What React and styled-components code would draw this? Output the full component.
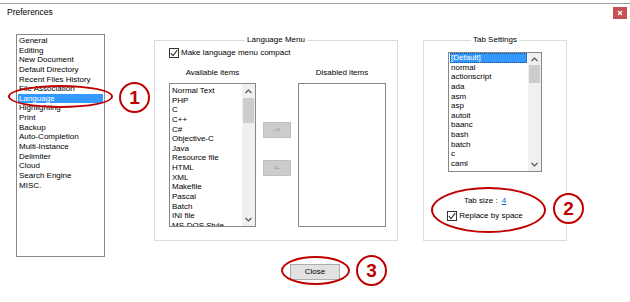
import React from 'react';
import styled, { createGlobalStyle } from 'styled-components';

const GlobalStyle = createGlobalStyle`
  html, body {
    margin: 0;
    padding: 0;
    background: #fff;
  }
  body {
    font-family: "Liberation Sans", Arial, sans-serif;
    font-size: 8px;
    color: #000;
  }
`;

const Window = styled.div`
  position: relative;
  width: 630px;
  height: 302px;
  overflow: hidden;
  background: #fff;
`;

const TitleBar = styled.div`
  margin-top: 3px;
  height: 26px;
  box-sizing: border-box;
  border-top: 1px solid #a0a0a0;
  display: flex;
  justify-content: space-between;
  align-items: flex-start;
`;

const Title = styled.div`
  padding: 3px 0 0 7px;
  font-size: 8.5px;
  line-height: 11px;
`;

const WinClose = styled.div`
  margin: 3px 3px 0 0;
  width: 14px;
  height: 12px;
  background: #c75050;
  display: flex;
  align-items: center;
  justify-content: center;
`;

const Body = styled.div`
  display: flex;
  align-items: flex-start;
  padding: 5px 0 0 16px;
`;

// generic list box with an optional scrollbar on the right
const ListBox = styled.div`
  width: ${p => p.$w}px;
  height: ${p => p.$h}px;
  margin-right: ${p => p.$mr || 0}px;
  box-sizing: border-box;
  border: 1px solid #828790;
  background: #fff;
  display: flex;
  overflow: hidden;
`;

const Items = styled.div`
  flex: 1;
  min-width: 0;
  overflow: hidden;
  padding: ${p => p.$pt || 0}px 1px 0 1px;
`;

const Item = styled.div`
  height: 9.65px;
  line-height: 9.65px;
  padding-left: 1px;
  white-space: nowrap;
  background: ${p => (p.$selected ? '#3399ff' : 'transparent')};
  color: ${p => (p.$selected ? '#fff' : '#000')};
  outline: ${p => (p.$focus ? '1px dotted #1a4f8a' : 'none')};
  outline-offset: -1px;
`;

const Scrollbar = styled.div`
  width: 13px;
  background: #f0f0f0;
  display: flex;
  flex-direction: column;
  align-items: center;
`;

const ArrowBox = styled.div`
  height: ${p => p.$h}px;
  width: 100%;
  display: flex;
  align-items: center;
  justify-content: center;
`;

const Thumb = styled.div`
  width: 11px;
  height: ${p => p.$h}px;
  background: #cdcdcd;
`;

const Spacer = styled.div`
  flex: 1;
`;

const Group = styled.fieldset`
  margin: 1px ${p => p.$mr || 0}px 0 0;
  padding: 0;
  min-width: 0;
  width: ${p => p.$w}px;
  height: 206px;
  box-sizing: border-box;
  border: 1px solid #dcdcdc;
  display: flex;
  flex-direction: column;
`;

const Legend = styled.legend`
  margin: 0 auto;
  padding: 0 2px;
  font-size: 8px;
  line-height: 10px;
`;

const LangContent = styled.div`
  padding: 3px 0 0 14px;
`;

const CheckRow = styled.label`
  display: flex;
  align-items: center;
  gap: 2px;
  height: 10px;
  line-height: 10px;
  white-space: nowrap;
  margin-top: ${p => p.$mt || 0}px;
`;

const Box = styled.span`
  width: 10px;
  height: 10px;
  box-sizing: border-box;
  border: 1px solid #333;
  background: #fff;
  display: flex;
  align-items: center;
  justify-content: center;
`;

const Columns = styled.div`
  margin-top: 10px;
  display: grid;
  grid-template-columns: 87px 42px 88px;
  grid-template-rows: 10px 144px;
  row-gap: 5px;
`;

const ColLabel = styled.div`
  grid-column: ${p => p.$col};
  text-align: center;
  line-height: 10px;
  white-space: nowrap;
`;

const MoveButtons = styled.div`
  display: flex;
  flex-direction: column;
  align-items: center;
  padding-top: 39px;
  gap: 22px;
`;

const MoveButton = styled.div`
  width: 28px;
  height: 16px;
  box-sizing: border-box;
  background: #cccccc;
  border: 1px solid #bfbfbf;
  color: #8c8c8c;
  font-size: 7px;
  line-height: 14px;
  text-align: center;
`;

const TabContent = styled.div`
  padding-top: 7px;
  display: flex;
  flex-direction: column;
  align-items: center;
`;

const TabOptions = styled.div`
  margin: 24px 20px 0 0;
  display: flex;
  flex-direction: column;
  align-items: center;
`;

const TabSize = styled.div`
  line-height: 10px;
  white-space: nowrap;
  a {
    color: #0066cc;
    text-decoration: underline;
    margin-left: 4px;
  }
`;

const Footer = styled.div`
  display: flex;
  justify-content: center;
  margin-top: 7px;
`;

const CloseButton = styled.div`
  width: 50px;
  height: 16px;
  box-sizing: border-box;
  background: #e1e1e1;
  border: 1px solid #adadad;
  line-height: 14px;
  text-align: center;
`;

// red annotation marks lying over the dialog
const Ring = styled.div`
  position: absolute;
  left: ${p => p.$x}px;
  top: ${p => p.$y}px;
  width: ${p => p.$w}px;
  height: ${p => p.$h}px;
  box-sizing: border-box;
  border: 2.5px solid #c00000;
  border-radius: 50%;
`;

const Badge = styled.div`
  position: absolute;
  left: ${p => p.$x}px;
  top: ${p => p.$y}px;
  width: 31px;
  height: 31px;
  box-sizing: border-box;
  border: 2px solid #c00000;
  border-radius: 50%;
  background: #fff;
  color: #c00000;
  font-family: "Liberation Sans", Arial, sans-serif;
  font-weight: bold;
  font-size: 19px;
  display: flex;
  align-items: center;
  justify-content: center;
`;

const Check = () => (
  <svg width="8" height="8" viewBox="0 0 8 8">
    <path d="M0.8 4.2 L3 6.6 L7.3 1.2" fill="none" stroke="#333" strokeWidth="1.1" />
  </svg>
);

const Chevron = ({ up }) => (
  <svg width="7" height="5" viewBox="0 0 7 5">
    <path d={up ? 'M0.5 4 L3.5 1 L6.5 4' : 'M0.5 1 L3.5 4 L6.5 1'} fill="none" stroke="#555" strokeWidth="1.2" />
  </svg>
);

const VScroll = ({ top, thumb }) => (
  <Scrollbar>
    <ArrowBox $h={top}><Chevron up /></ArrowBox>
    <Thumb $h={thumb} />
    <Spacer />
    <ArrowBox $h={13}><Chevron /></ArrowBox>
  </Scrollbar>
);

const categories = [
  'General', 'Editing', 'New Document', 'Default Directory', 'Recent Files History',
  'File Association', 'Language', 'Highlighting', 'Print', 'Backup', 'Auto-Completion',
  'Multi-Instance', 'Delimiter', 'Cloud', 'Search Engine', 'MISC.'
];

const languages = [
  'Normal Text', 'PHP', 'C', 'C++', 'C#', 'Objective-C', 'Java', 'Resource file',
  'HTML', 'XML', 'Makefile', 'Pascal', 'Batch', 'INI file', 'MS-DOS Style'
];

const tabLangs = [
  '[Default]', 'normal', 'actionscript', 'ada', 'asm', 'asp', 'autoit', 'baanc',
  'bash', 'batch', 'c', 'caml', 'cmake'
];

export default function App() {
  return (
    <Window>
      <GlobalStyle />
      <TitleBar>
        <Title>Preferences</Title>
        <WinClose>
          <svg width="6" height="6" viewBox="0 0 6 6">
            <path d="M1 1 L5 5 M5 1 L1 5" stroke="#fff" strokeWidth="1.3" />
          </svg>
        </WinClose>
      </TitleBar>

      <Body>
        <ListBox $w={89} $h={223} $mr={49}>
          <Items $pt={1}>
            {categories.map(c => (
              <Item key={c} $selected={c === 'Language'}>{c}</Item>
            ))}
          </Items>
        </ListBox>

        <Group $w={244} $mr={25}>
          <Legend>Language Menu</Legend>
          <LangContent>
            <CheckRow>
              <Box><Check /></Box>
              Make language menu compact
            </CheckRow>
            <Columns>
              <ColLabel $col={1}>Available items</ColLabel>
              <ColLabel $col={3}>Disabled items</ColLabel>
              <ListBox $w={87} $h={144}>
                <Items $pt={2}>
                  {languages.map(l => <Item key={l}>{l}</Item>)}
                </Items>
                <VScroll top={14} thumb={25} />
              </ListBox>
              <MoveButtons>
                <MoveButton>-&gt;</MoveButton>
                <MoveButton>&lt;-</MoveButton>
              </MoveButtons>
              <ListBox $w={88} $h={144} />
            </Columns>
          </LangContent>
        </Group>

        <Group $w={144}>
          <Legend>Tab Settings</Legend>
          <TabContent>
            <ListBox $w={94} $h={120}>
              <Items>
                {tabLangs.map(t => (
                  <Item key={t} $selected={t === '[Default]'} $focus={t === '[Default]'}>{t}</Item>
                ))}
              </Items>
              <VScroll top={12} thumb={18} />
            </ListBox>
            <TabOptions>
              <TabSize>Tab size :<a>4</a></TabSize>
              <CheckRow $mt={5}>
                <Box><Check /></Box>
                Replace by space
              </CheckRow>
            </TabOptions>
          </TabContent>
        </Group>
      </Body>

      <Footer>
        <CloseButton>Close</CloseButton>
      </Footer>

      <Ring $x={8} $y={85} $w={105} $h={23} />
      <Badge $x={119} $y={82}>1</Badge>
      <Ring $x={431} $y={187} $w={115} $h={46} />
      <Badge $x={553} $y={193}>2</Badge>
      <Ring $x={281} $y={256} $w={69} $h={29} />
      <Badge $x={356} $y={255}>3</Badge>
    </Window>
  );
}
